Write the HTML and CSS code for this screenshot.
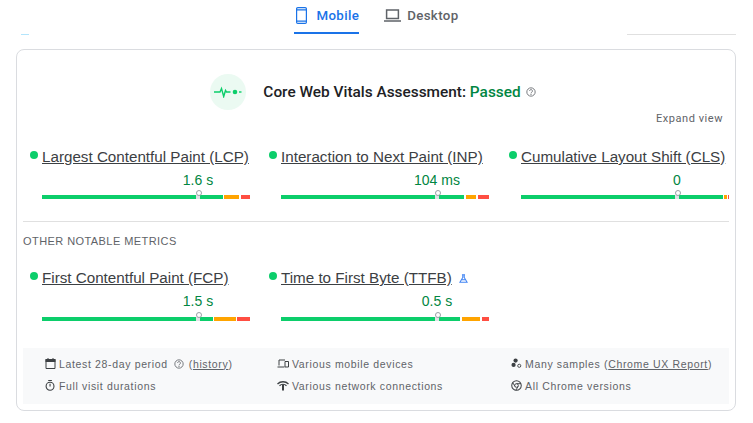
FILE: index.html
```html
<!DOCTYPE html>
<html lang="en">
<head>
  <meta charset="UTF-8" />
  <title>PageSpeed Insights</title>
  <link rel="stylesheet" href="styles.css">
</head>

<body>
  <div class="tabs">
    <span class="edge edge-left"></span>
    <span class="edge edge-right"></span>
    <a class="tab active">
      <svg class="tab-icon" viewBox="0 0 11 17"><path d="M1.800 .6h7.400a1.200 1.200 0 0 1 1.200 1.200v13.400a1.200 1.200 0 0 1-1.200 1.200h-7.400a1.200 1.200 0 0 1-1.200-1.200v-13.400a1.200 1.200 0 0 1 1.200-1.200zM.6 2.800h9.800M.6 14.200h9.800" fill="none" stroke="currentColor" stroke-width="1.200"/></svg>
      <span>Mobile</span>
    </a>
    <a class="tab">
      <svg class="tab-icon laptop" viewBox="0 0 17 13"><path d="M2.600 1h11.800v8.600H2.600zM0 12h17" fill="none" stroke="currentColor" stroke-width="1.500"/></svg>
      <span>Desktop</span>
    </a>
  </div>

  <div class="card">
    <div class="assessment">
      <span class="pulse">
        <svg viewBox="0 0 28 12" width="28" height="12"><path d="M0 6h6l1.500-3.500 2.200 8 1.800-6 1 1.500h4" fill="none" stroke="#0cce6b" stroke-width="1.400"/><circle cx="21" cy="6" r="2.300" fill="#0cce6b"/><path d="M25 6h2.500" stroke="#0cce6b" stroke-width="1.400"/></svg>
      </span>
      <span class="assessment-title">Core Web Vitals Assessment: <b>Passed</b></span>
      <svg class="help" viewBox="0 0 12 12"><use href="#help-shape"/></svg>
    </div>
    <div class="expand">Expand view</div>

    <div class="metrics">
      <div class="metric">
        <a class="metric-name">Largest Contentful Paint (LCP)</a>
        <div class="value">1.6 s</div>
        <div class="bar">
          <span class="good" style="width: 87%"></span><span class="mid" style="width: 7.2%"></span><span class="bad" style="width: 4.5%"></span>
          <i class="mark"></i>
        </div>
      </div>
      <div class="metric">
        <a class="metric-name">Interaction to Next Paint (INP)</a>
        <div class="value">104 ms</div>
        <div class="bar">
          <span class="good" style="width: 88%"></span><span class="mid" style="width: 4.8%"></span><span class="bad" style="width: 5.3%"></span>
          <i class="mark"></i>
        </div>
      </div>
      <div class="metric">
        <a class="metric-name">Cumulative Layout Shift (CLS)</a>
        <div class="value">0</div>
        <div class="bar">
          <span class="good" style="width: 97.1%"></span><span class="mid" style="width: 1.5%"></span><span class="bad" style="width: .6%"></span>
          <i class="mark"></i>
        </div>
      </div>
    </div>

    <div class="other-title">OTHER NOTABLE METRICS</div>

    <div class="metrics other">
      <div class="metric">
        <a class="metric-name">First Contentful Paint (FCP)</a>
        <div class="value">1.5 s</div>
        <div class="bar">
          <span class="good" style="width: 82.2%"></span><span class="mid" style="width: 10.3%"></span><span class="bad" style="width: 6.3%"></span>
          <i class="mark"></i>
        </div>
      </div>
      <div class="metric">
        <a class="metric-name">Time to First Byte (TTFB)</a>
        <svg class="flask" viewBox="0 0 10 10"><path d="M3.300 .8h3.400M4.200 .8v3L1 9.200h8L5.800 3.800V.8M2.800 6.400h4.400" fill="none" stroke="currentColor" stroke-width="1.200"/></svg>
        <div class="value">0.5 s</div>
        <div class="bar">
          <span class="good" style="width: 86%"></span><span class="mid" style="width: 8.700%"></span><span class="bad" style="width: 3.400%"></span>
          <i class="mark"></i>
        </div>
      </div>
    </div>

    <div class="facts">
      <div class="fact">
        <svg class="fact-icon" viewBox="0 0 10 11"><path d="M.5 1.500h9v9h-9z" fill="none" stroke="currentColor"/><path d="M0 1h10v3H0zM2 0h1v2H2zM7 0h1v2H7z" fill="currentColor"/></svg>
        <span>Latest 28-day period</span>
        <svg class="help fact-help" viewBox="0 0 12 12"><use href="#help-shape"/></svg>
        <span class="history">(<a>history</a>)</span>
      </div>
      <div class="fact">
        <svg class="fact-icon wide" viewBox="0 0 12 10"><path d="M2 7V1.500h6M.5 8.500h7" fill="none" stroke="currentColor"/><path d="M8 3h3.500v5.500H8z" fill="none" stroke="currentColor"/></svg>
        <span>Various mobile devices</span>
      </div>
      <div class="fact">
        <svg class="fact-icon" viewBox="0 0 12 12"><circle cx="5" cy="2.800" r="2.300" fill="currentColor"/><circle cx="2.800" cy="7.500" r="2.300" fill="currentColor"/><circle cx="9" cy="8.500" r="1.700" fill="none" stroke="currentColor"/></svg>
        <span>Many samples (<a>Chrome UX Report</a>)</span>
      </div>
      <div class="fact">
        <svg class="fact-icon" viewBox="0 0 12 12"><circle cx="5.500" cy="6.800" r="4.300" fill="none" stroke="currentColor" stroke-width="1.200"/><path d="M3.500.6h4M5.500 4v3" stroke="currentColor" stroke-width="1.200"/></svg>
        <span>Full visit durations</span>
      </div>
      <div class="fact">
        <svg class="fact-icon wide" viewBox="0 0 12 10"><path d="M.5 3.500C3.500.5 8.500.5 11.500 3.500M2.500 5.200C4.500 3.400 7.500 3.400 9.500 5.200" fill="none" stroke="currentColor" stroke-width="1.300"/><path d="M5 4h2v6H5z" fill="currentColor"/></svg>
        <span>Various network connections</span>
      </div>
      <div class="fact">
        <svg class="fact-icon" viewBox="0 0 12 12"><circle cx="6" cy="6" r="5.200" fill="none" stroke="currentColor" stroke-width="1.100"/><circle cx="6" cy="6" r="2" fill="none" stroke="currentColor"/><path d="M6 4h4.800M4.300 7L1.900 2.800M7.700 7l-2.400 4.200" stroke="currentColor"/></svg>
        <span>All Chrome versions</span>
      </div>
    </div>
  </div>

  <svg class="defs" width="0" height="0">
    <symbol id="help-shape" viewBox="0 0 12 12">
      <circle cx="6" cy="6" r="5" fill="none" stroke="currentColor" stroke-width="1"/>
      <path d="M4.300 4.800a1.700 1.700 0 1 1 2.700 1.400c-.7.500-1 .8-1 1.500" fill="none" stroke="currentColor" stroke-width="1"/>
      <circle cx="6" cy="9" r=".7" fill="currentColor"/>
    </symbol>
  </svg>
</body>
</html>
```

FILE: styles.css
```css
/* === Basic Reset === */
* {
  margin: 0;
  padding: 0;
  box-sizing: border-box;
}

body {
  font-family: 'Liberation Sans', Arial, sans-serif;
  background: #fff;
  color: #202124;
  padding: 0 17px 0 16px;
}

a {
  color: inherit;
  text-decoration: underline;
}

.defs {
  position: absolute;
}

/* === Tabs === */
.tabs {
  position: relative;
  display: flex;
  justify-content: center;
  gap: 25px;
  height: 35px;
  margin-bottom: 14px;
}

.edge {
  position: absolute;
  top: 34px;
  height: 1px;
}

.edge-left {
  left: 5px;
  width: 8px;
  background: #b3e5fc;
}

.edge-right {
  right: 0;
  width: 109px;
  background: #e0e0e0;
}

.tab {
  display: flex;
  align-items: center;
  gap: 6px;
  height: 34px;
  padding-bottom: 3px;
  font-family: 'Roboto', sans-serif;
  font-size: 13.3px;
  font-weight: 500;
  letter-spacing: .35px;
  color: #5f6368;
  text-decoration: none;
}

.tab.active {
  gap: 10px;
  padding-left: 2px;
  padding-bottom: 1px;
  color: #1a73e8;
  border-bottom: 2px solid #1a73e8;
}

.tab-icon {
  width: 11px;
  height: 17px;
}

.tab-icon.laptop {
  width: 17px;
  height: 13px;
}

/* === Card === */
.card {
  height: 362px;
  border: 1px solid #dadce0;
  border-radius: 8px;
  padding: 24px 6px 6px;
}

.assessment {
  display: flex;
  align-items: center;
  justify-content: center;
  height: 36px;
  padding-right: 6px;
}

.pulse {
  display: flex;
  align-items: center;
  justify-content: center;
  width: 36px;
  height: 36px;
  margin-right: 17px;
  border-radius: 50%;
  background: #ebfaf2;
}

.assessment-title {
  font-family: 'Roboto', sans-serif;
  font-size: 15.4px;
  font-weight: 500;
  color: #202124;
}

.assessment-title b {
  font-weight: 500;
  color: #018642;
}

.help {
  width: 10px;
  height: 10px;
  margin-left: 5px;
  color: #5f6368;
}

.expand {
  margin-top: 2px;
  padding-right: 6px;
  text-align: right;
  font-family: 'Roboto', sans-serif;
  font-size: 11px;
  letter-spacing: .55px;
  color: #5f6368;
}

/* === Metrics === */
.metrics {
  display: grid;
  grid-template-columns: 239px 240px 208px;
  padding: 23px 0 22px 19px;
  border-bottom: 1px solid #e0e0e0;
}

.metrics.other {
  padding-top: 22px;
  padding-bottom: 0;
  border-bottom: none;
}

.metric {
  position: relative;
  width: 208px;
}

.metric::before {
  content: "";
  position: absolute;
  left: -12px;
  top: 3px;
  width: 8px;
  height: 8px;
  border-radius: 50%;
  background: #0cce6b;
}

.metric-name {
  font-size: 15.2px;
  color: #3c4043;
  white-space: nowrap;
}

.flask {
  width: 9px;
  height: 9px;
  margin-left: 3px;
  color: #4285f4;
}

.value {
  width: fit-content;
  margin-left: 75%;
  transform: translateX(-50%);
  margin-top: 6px;
  font-size: 14px;
  color: #018642;
}

.bar {
  position: relative;
  display: flex;
  justify-content: space-between;
  height: 4px;
  margin-top: 7px;
}

.other .bar {
  margin-top: 8px;
}

.good {
  background: #0cce6b;
}

.mid {
  background: #ffa400;
}

.bad {
  background: #ff4e42;
}

.mark {
  position: absolute;
  left: 75%;
  top: -5px;
  width: 4px;
  height: 9px;
  margin-left: -2px;
  background: linear-gradient(#fff 5px, #dfe1e5 5px);
}

.mark::before {
  content: "";
  position: absolute;
  left: 0;
  top: 0;
  width: 4px;
  height: 4px;
  border: 1px solid #9aa0a6;
  border-radius: 50%;
}

.other-title {
  margin-top: 13px;
  font-size: 11px;
  letter-spacing: .43px;
  color: #5f6368;
}

/* === Bottom facts === */
.facts {
  display: grid;
  grid-template-columns: 232px 234px 1fr;
  align-content: start;
  row-gap: 9px;
  height: 56px;
  margin-top: 27px;
  padding: 9px 0 0 22px;
  background: #f8f9fa;
  font-size: 10.5px;
  letter-spacing: .65px;
  color: #5f6368;
}

.fact {
  display: flex;
  align-items: center;
  height: 13px;
  white-space: nowrap;
}

.fact-icon {
  width: 11px;
  height: 11px;
  margin-right: 3px;
  color: #3c4043;
}

.fact-icon.wide {
  width: 12px;
}

.fact-help {
  margin-left: 6px;
}

.history {
  margin-left: 5px;
}
```
